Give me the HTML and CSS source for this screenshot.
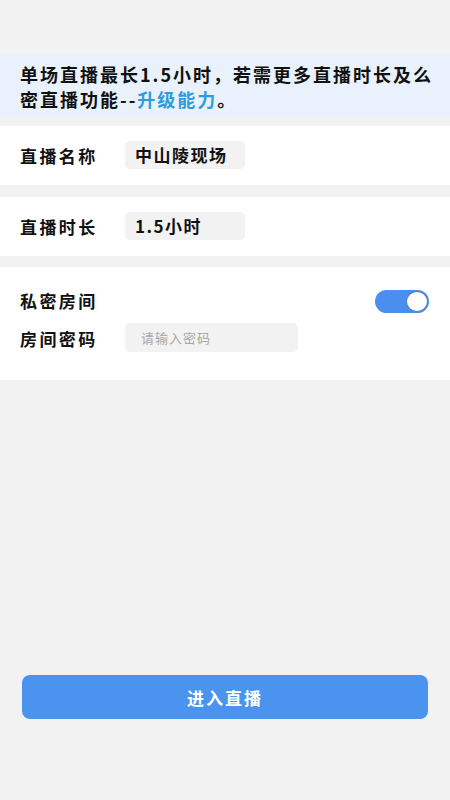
FILE: index.html
```html
<!DOCTYPE html>
<html lang="zh-CN">
<head>
<meta charset="utf-8">
<meta name="viewport" content="width=450">
<link rel="stylesheet" href="styles.css">
</head>
<body>
<div class="page">
  <div class="notice">单场直播最长1.5小时，若需更多直播时长及么密直播功能--<span class="link">升级能力</span>。</div>

  <div class="card row">
    <span class="label">直播名称</span>
    <span class="field">中山陵现场</span>
  </div>

  <div class="card row">
    <span class="label">直播时长</span>
    <span class="field">1.5小时</span>
  </div>

  <div class="card private">
    <div class="line">
      <span class="label">私密房间</span>
      <span class="toggle"><span class="knob"></span></span>
    </div>
    <div class="line">
      <span class="label">房间密码</span>
      <span class="field pwd">请输入密码</span>
    </div>
  </div>

  <div class="spacer"></div>

  <div class="btn-wrap">
    <button class="enter">进入直播</button>
  </div>
</div>
</body>
</html>
```

FILE: styles.css
```css
* { box-sizing: border-box; }
html, body {
  margin: 0;
  padding: 0;
  background: #f2f2f2;
}
body {
  font-family: "Noto Sans CJK SC", "Noto Sans", sans-serif;
  color: #111;
}
.page {
  width: 450px;
  height: 800px;
  display: flex;
  flex-direction: column;
  padding-top: 54px;
}
.notice {
  background: #e8f1fc;
  height: 63px;
  padding: 8px 8px 0 20px;
  font-size: 18px;
  line-height: 25px;
  font-weight: 700;
  letter-spacing: 2px;
}
.link { color: #2b9ce0; }
.card {
  background: #fff;
  margin-top: 10px;
}
.notice + .card { margin-top: 9px; }
.row {
  height: 59px;
  display: flex;
  align-items: center;
  padding-left: 20px;
}
.card.row + .card.row { margin-top: 12px; }
.label {
  font-size: 17px;
  font-weight: 700;
  letter-spacing: 2.4px;
  width: 105px;
  flex: none;
}
.field {
  background: #f2f2f2;
  border-radius: 5px;
  width: 120px;
  height: 28px;
  display: flex;
  align-items: center;
  padding-left: 10px;
  font-size: 17px;
  font-weight: 700;
  letter-spacing: 1.5px;
  position: relative;
  top: -1px;
}
.private {
  margin-top: 11px;
  height: 113px;
  padding: 19px 21px 0 20px;
  display: flex;
  flex-direction: column;
  gap: 10px;
}
.line {
  display: flex;
  align-items: center;
  height: 28px;
}
.toggle {
  margin-left: auto;
  width: 54px;
  height: 23px;
  border-radius: 12px;
  background: #4a8ff0;
  display: flex;
  align-items: center;
  justify-content: flex-end;
  padding-right: 1px;
  position: relative;
  top: 1px;
}
.knob {
  width: 22px;
  height: 21px;
  border-radius: 50%;
  background: #fff;
  border: 1px solid #5a7fb0;
}
.pwd {
  width: 173px;
  height: 29px;
  padding-left: 16px;
  font-size: 13px;
  font-weight: 400;
  color: #a8a8a8;
  letter-spacing: 1px;
}
.spacer { flex: 1; }
.btn-wrap {
  padding: 0 22px 81px;
}
.enter {
  width: 100%;
  height: 44px;
  border: none;
  border-radius: 8px;
  background: #4a94ef;
  color: #fff;
  font-family: "Noto Sans CJK SC", "Noto Sans", sans-serif;
  font-size: 17px;
  font-weight: 700;
  letter-spacing: 2px;
}
```
